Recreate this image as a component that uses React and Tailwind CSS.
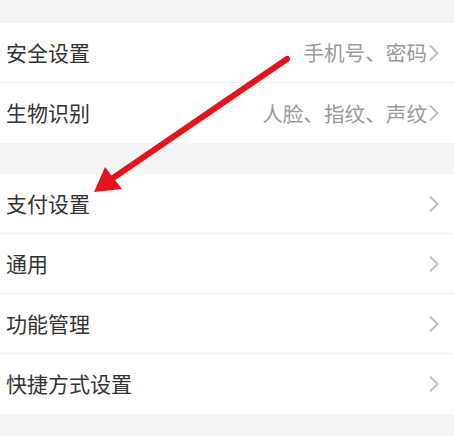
export default function App() {
  const Chevron = () => (
    <svg width="12" height="18" viewBox="0 0 12 18" className="shrink-0">
      <path d="M2 1.5 L9.5 9 L2 16.5" fill="none" stroke="#bdbdbd" strokeWidth="1.8" />
    </svg>
  );
  const Row = ({ title, sub, last }) => (
    <div className={`flex h-[60px] items-center pl-[6px] pr-[14px] ${last ? "" : "border-b border-[#ececec]"}`}>
      <span className="flex-1 text-[21px] text-[#333333]">{title}</span>
      {sub && <span className="text-[20.6px] text-[#9a9a9a] mr-[1px]">{sub}</span>}
      <Chevron />
    </div>
  );
  return (
    <div
      className="relative w-[454px] h-[436px] bg-[#f4f4f4] overflow-hidden"
      style={{ fontFamily: '"Noto Sans CJK SC", "Noto Sans", sans-serif' }}
    >
      <div className="h-[23px]" />
      <div className="bg-white">
        <Row title="安全设置" sub="手机号、密码" />
        <Row title="生物识别" sub="人脸、指纹、声纹" last />
      </div>
      <div className="h-[31px]" />
      <div className="bg-white">
        <Row title="支付设置" />
        <Row title="通用" />
        <Row title="功能管理" />
        <Row title="快捷方式设置" last />
      </div>
      <svg className="absolute left-0 top-0" width="454" height="436">
        <line x1="287" y1="59" x2="113" y2="178" stroke="#e5141c" strokeWidth="6" strokeLinecap="round" />
        <polygon points="94,192 105,167 122,189" fill="#e5141c" />
      </svg>
    </div>
  );
}
